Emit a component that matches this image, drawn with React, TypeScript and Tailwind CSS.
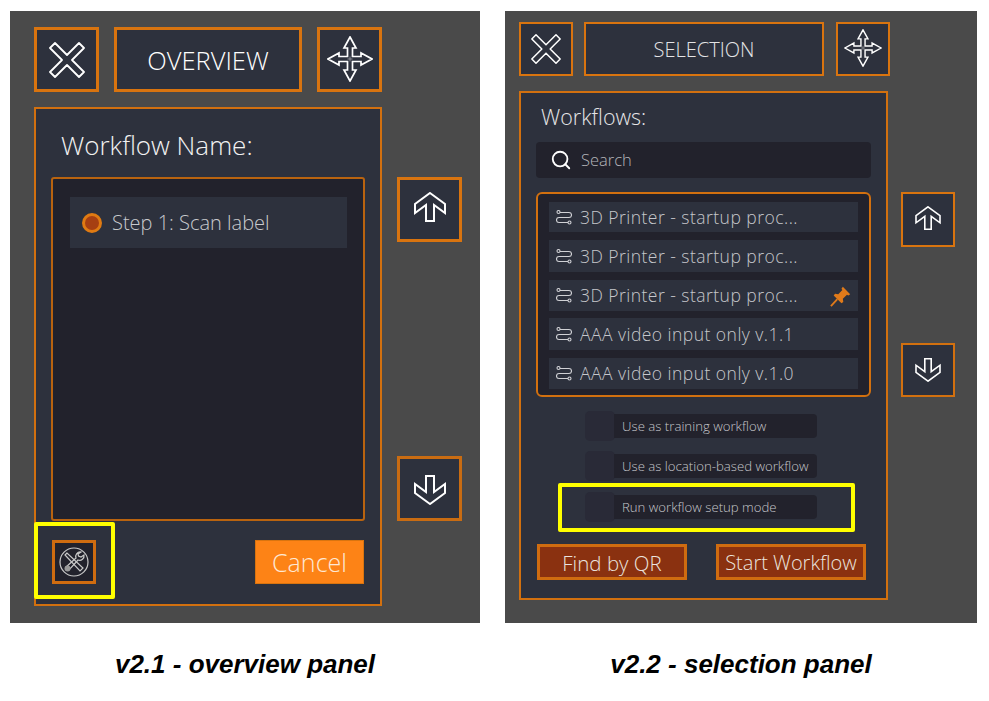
import { Search } from "lucide-react";

const ui = "font-['Open_Sans',sans-serif]";

function CloseIcon({ className }: { className: string }) {
    return (
        <svg viewBox="0 0 36 36" className={className} fill="none" stroke="#fff" strokeWidth={1.8} strokeLinejoin="round">
            <path d="M1 6L6 1L18 13L30 1L35 6L23 18L35 30L30 35L18 23L6 35L1 30L13 18Z" />
        </svg>
    );
}

function MoveIcon({ className }: { className: string }) {
    return (
        <svg viewBox="0 0 46 46" className={className} fill="none" stroke="#fff" strokeWidth={1.7} strokeLinejoin="miter">
            <path d="M23 1L29 12H25.500V20.500H34V17L45 23L34 29V25.500H25.500V34H29L23 45L17 34H20.500V25.500H12V29L1 23L12 17V20.500H20.500V12H17Z" />
            <path d="M23 20.500V25.500M20.500 23H25.500" strokeWidth={0.8} stroke="#9fa1a8" />
        </svg>
    );
}

function ArrowIcon({ className }: { className: string }) {
    return (
        <svg viewBox="0 0 32 30" className={className} fill="none" stroke="#fff" strokeWidth={2} strokeLinejoin="miter">
            <path d="M16 1L31 12V21L20 13V29H12V13L1 21V12Z" />
        </svg>
    );
}

function ToolsIcon() {
    return (
        <svg viewBox="0 0 30 30" className="w-[30px] h-[30px]" fill="none" stroke="#c9c9c9" strokeWidth={1.2}>
            <circle cx="15" cy="15" r="14" />
            <path d="M8 6L6 8L21 24L24 21Z" />
            <path d="M22 5a4.500 4.500 0 0 0-5 6L7 20l3 3 9-10a4.500 4.500 0 0 0 6-5l-3 2-2.500-1-.5-2z" />
            <circle cx="8.500" cy="21.500" r="3" fill="#9a9a9a" stroke="none" />
        </svg>
    );
}

function FlowIcon() {
    return (
        <svg viewBox="0 0 16 15" className="w-4 h-[15px] shrink-0" fill="none" stroke="#d0d1d5" strokeWidth={1.1}>
            <circle cx="2.500" cy="2" r="1.500" />
            <path d="M4 2.500H13a2.300 2.300 0 0 1 0 5H3a2.300 2.300 0 0 0 0 5H12" />
            <circle cx="13.500" cy="12.500" r="1.500" />
        </svg>
    );
}

function PinIcon() {
    return (
        <svg viewBox="0 0 24 24" className="w-[22px] h-[22px] shrink-0" fill="#e07a1a">
            <path d="M14 2L22 10L20 11.500L18.500 10.500L14 15L14.500 18.500L12.500 20L4 11.500L5.500 9.500L9 10L13.500 5.500L12.500 4Z" />
            <path d="M1 23L8 15.500" stroke="#e07a1a" strokeWidth={2} />
        </svg>
    );
}

function Toggle({ label, className }: { label: string; className: string }) {
    return (
        <div className={`flex items-center h-[30px] ${className}`}>
            <div className="w-[30px] h-[30px] rounded-[5px] bg-[#292a37] shrink-0" />
            <div className="w-[203px] h-6 -ml-px bg-[#22222c] rounded-r-sm pl-2 pt-px flex items-center text-[13.200px] font-light text-[#c6c7cb] whitespace-nowrap">
                {label}
            </div>
        </div>
    );
}

const rows = [
    { name: "3D Printer - startup proc...", cls: "h-[30px]" },
    { name: "3D Printer - startup proc...", cls: "h-8 mt-2" },
    { name: "3D Printer - startup proc...", cls: "h-[31px] mt-2", pin: true },
    { name: "AAA video input only v.1.1", cls: "h-8 mt-[7px]" },
    { name: "AAA video input only v.1.0", cls: "h-[31px] mt-2" },
];

function OverviewPanel() {
    return (
        <div className="w-[470px] h-[612px] bg-[#4a4a4a] pl-6 pt-4 flex">
            <div className="w-[348px]">
                <div className="flex justify-between">
                    <div className="w-[65px] h-[65px] border-[3px] border-[#d9740f] bg-[#2d313d] flex items-center justify-center">
                        <CloseIcon className="w-9 h-9" />
                    </div>
                    <div className="w-[188px] h-[65px] pt-px border-[3px] border-[#d9740f] bg-[#2d313d] flex items-center justify-center text-[25.500px] text-white font-light">
                        OVERVIEW
                    </div>
                    <div className="w-[65px] h-[65px] border-[3px] border-[#d9740f] bg-[#2d313d] flex items-center justify-center">
                        <MoveIcon className="w-[46px] h-[46px] mb-[2px]" />
                    </div>
                </div>
                <div className="mt-[15px] h-[499px] border-2 border-[#d2700f] bg-[#2d313d] pl-[15px] pr-[15px]">
                    <div className="h-[68px] pt-[18px] pl-[10px] text-[26px] leading-[36px] text-[#f2f2f2] font-light whitespace-nowrap">
                        Workflow Name:
                    </div>
                    <div className="h-[344px] rounded-[3px] border-2 border-[#b9630f] bg-[#22222c] pt-[18px] pl-[17px]">
                        <div className="w-[277px] h-[51px] bg-[#2d313d] flex items-center pl-[12px] gap-[10px] text-[20px] font-light text-[#c9cacd]">
                            <span className="w-5 h-5 rounded-full border-[3px] border-[#df7a12] bg-[#a63f12]" />
                            Step 1: Scan label
                        </div>
                    </div>
                    <div className="flex justify-between items-start mt-px">
                        <div className="w-[81px] h-[77px] -ml-[17px] border-4 border-[#ffff00] rounded-[2px] pt-[14px] pl-[14px]">
                            <div className="w-[44px] h-[44px] border-[3px] border-[#cf6c10] bg-[#22222c] flex items-center justify-center">
                                <ToolsIcon />
                            </div>
                        </div>
                        <div className="w-[109px] h-[44px] mt-[18px] mr-px pt-[2px] bg-[#fd8316] border border-[#d9740f] flex items-center justify-center text-[25px] font-light text-[#fde8d4]">
                            Cancel
                        </div>
                    </div>
                </div>
            </div>
            <div className="ml-[15px] pt-[150px]">
                <div className="w-[65px] h-[65px] border-[3px] border-[#d9740f] bg-[#2d313d] flex items-center justify-center">
                    <ArrowIcon className="w-8 h-[30px] mb-[5px]" />
                </div>
                <div className="w-[65px] h-[65px] mt-[214px] border-[3px] border-[#c96c12] bg-[#2d313d] flex items-center justify-center">
                    <ArrowIcon className="w-8 h-[30px] rotate-180 mt-[3px]" />
                </div>
            </div>
        </div>
    );
}

function SelectionPanel() {
    return (
        <div className="w-[472px] h-[612px] bg-[#4a4a4a] pl-[14px] pt-[11px] flex">
            <div className="w-[369px]">
                <div className="flex">
                    <div className="w-[54px] h-[54px] shrink-0 border-2 border-[#d9740f] bg-[#2d313d] flex items-center justify-center">
                        <CloseIcon className="w-[30px] h-[30px]" />
                    </div>
                    <div className="w-[240px] h-[54px] shrink-0 pt-px ml-[11px] border-2 border-[#d9740f] bg-[#2d313d] flex items-center justify-center text-[20px] text-[#e4e4e6] font-light">
                        SELECTION
                    </div>
                    <div className="w-[54px] h-[54px] shrink-0 ml-3 border-2 border-[#d9740f] bg-[#2d313d] flex items-center justify-center">
                        <MoveIcon className="w-[38px] h-[38px] mb-[2px]" />
                    </div>
                </div>
                <div className="mt-[15px] h-[509px] border-2 border-[#d2700f] bg-[#2d313d] pl-[15px] pr-[15px]">
                    <div className="h-[49px] pt-[10px] pl-[5px] text-[21.500px] leading-[28px] text-[#e6e6e8] whitespace-nowrap font-light">
                        Workflows:
                    </div>
                    <div className="w-[335px] h-9 rounded-[4px] bg-[#22222c] flex items-center pl-[14px] gap-[9px] text-[16.500px] font-light text-[#b4b5ba]">
                        <Search className="w-[22px] h-[22px] text-white" strokeWidth={2} />
                        Search
                    </div>
                    <div className="w-[335px] h-[205px] mt-[14px] rounded-[6px] border-2 border-[#d2700f] bg-[#22222c] pt-2 pl-[11px]">
                        {rows.map((row, i) => (
                            <div key={i} className={`w-[309px] ${row.cls} bg-[#2d313d] flex items-center pl-[7px] gap-2 text-[17.500px] tracking-[0.47px] font-light text-[#c6c7cb] whitespace-nowrap`}>
                                <FlowIcon />
                                <span className="flex-1">{row.name}</span>
                                {row.pin && <span className="mr-[6px]"><PinIcon /></span>}
                            </div>
                        ))}
                    </div>
                    <div className="pl-[49px]">
                        <Toggle label="Use as training workflow" className="mt-[14px]" />
                        <Toggle label="Use as location-based workflow" className="mt-[10px]" />
                    </div>
                    <div className="w-[297px] h-[49px] mt-[2px] ml-[22px] border-4 border-[#ffff00] rounded-[2px] pl-[23px] pt-[5px]">
                        <Toggle label="Run workflow setup mode" className="" />
                    </div>
                    <div className="flex justify-between mt-3 ml-px w-[329px]">
                        <div className="w-[150px] h-9 pt-[2px] border-[3px] border-[#cf6c10] bg-[#8a3110] flex items-center justify-center text-[20.500px] font-light text-[#ebe4df]">
                            Find by QR
                        </div>
                        <div className="w-[150px] h-9 pt-[2px] border-[3px] border-[#cf6c10] bg-[#8a3110] flex items-center justify-center text-[20px] font-light text-[#ebe4df] whitespace-nowrap">
                            Start Workflow
                        </div>
                    </div>
                </div>
            </div>
            <div className="ml-[13px] pt-[170px]">
                <div className="w-[54px] h-[55px] border-2 border-[#d9740f] bg-[#2d313d] flex items-center justify-center">
                    <ArrowIcon className="w-[26px] h-6 mb-[3px]" />
                </div>
                <div className="w-[54px] h-[54px] mt-[96px] border-2 border-[#d2700f] bg-[#2d313d] flex items-center justify-center">
                    <ArrowIcon className="w-[26px] h-6 rotate-180" />
                </div>
            </div>
        </div>
    );
}

export default function App() {
    return (
        <div className={`w-[989px] h-[701px] bg-white pt-[11px] pl-[10px] overflow-hidden ${ui}`}>
            <div className="flex gap-[25px]">
                <div className="w-[470px]">
                    <OverviewPanel />
                    <p className="mt-[26px] text-center font-['Liberation_Sans',sans-serif] font-bold italic text-[26px] leading-[30px] text-black">
                        v2.1 - overview panel
                    </p>
                </div>
                <div className="w-[472px]">
                    <SelectionPanel />
                    <p className="mt-[26px] text-center font-['Liberation_Sans',sans-serif] font-bold italic text-[26px] leading-[30px] text-black">
                        v2.2 - selection panel
                    </p>
                </div>
            </div>
        </div>
    );
}
